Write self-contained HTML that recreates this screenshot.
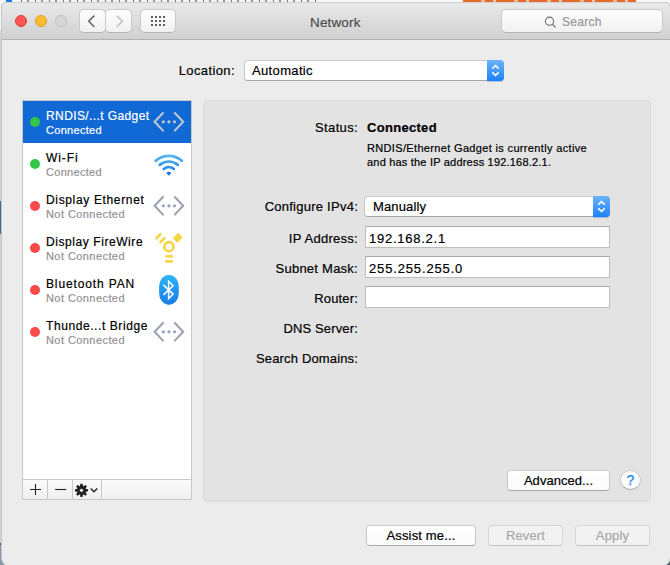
<!DOCTYPE html>
<html><head><meta charset="utf-8">
<style>
*{margin:0;padding:0;box-sizing:border-box}
html,body{width:670px;height:565px;overflow:hidden;background:#f7f7f7;font-family:"Liberation Sans",sans-serif;color:#000}
body{position:relative;-webkit-text-stroke:0.2px currentColor}
#win{position:absolute;left:1px;top:2px;width:670px;height:565px;border-radius:5px 5px 10px 9px;border:1px solid #c4c4c4;background:#ececec;overflow:hidden}
#tb{position:absolute;left:1px;top:2px;width:670px;height:38px;border-radius:5px 5px 0 0;border:1px solid #c4c4c4;border-top-color:#cfcfcf;border-bottom:1px solid #b1b1b1;background:linear-gradient(#e9e9e9,#d0d0d0)}
.tl{position:absolute;top:15px;width:12px;height:12px;border-radius:50%}
.btn{position:absolute;background:linear-gradient(#fdfdfd,#f1f1f1);border:1px solid #c9c9c9;border-bottom-color:#b5b5b5;border-radius:5px}
.t{position:absolute;white-space:nowrap;font-size:13px;line-height:16px;letter-spacing:0.15px}
.r{text-align:right}
#side{position:absolute;left:22px;top:100px;width:170px;height:400px;border:1px solid #c8c8c8;background:#fff}
.row{position:absolute;left:0;width:168px;height:42px}
.dot{position:absolute;left:7px;top:16px;width:10px;height:10px;border-radius:50%}
.g{background:#33c748}
.rd{background:#fb4a4c}
.nm{position:absolute;left:23px;top:7.6px;font-size:12px;line-height:14px;white-space:nowrap;letter-spacing:0.4px}
.st{position:absolute;left:23px;top:23px;font-size:11px;line-height:13px;color:#929292;white-space:nowrap;letter-spacing:0.3px}
.ico{position:absolute;left:122px;top:0;width:46px;height:42px}
#bar{position:absolute;left:22px;top:479px;width:170px;height:21px;border:1px solid #c8c8c8;background:linear-gradient(#fbfbfb,#f0f0f0)}
#panel{position:absolute;left:203px;top:100px;width:448px;height:402px;border:1px solid #dadada;border-radius:4px;background:#e3e3e3}
.fld{position:absolute;left:365px;width:245px;height:22px;background:#fff;border:1px solid #bdbdbd;border-top-color:#a9a9a9}
.pop{position:absolute;background:#fff;border-radius:4px;border:1px solid #c4c4c4;border-top-color:#cbcbcb;border-bottom-color:#a6a6a6}
.pop .arr{position:absolute;right:-1px;top:-1px;bottom:-1px;width:17px;border-radius:0 4px 4px 0;background:linear-gradient(#6cb3fa,#1a82fb);box-shadow:0 1px 0 rgba(0,60,160,.25)}
.pb{position:absolute;height:21px;border-radius:4px;background:linear-gradient(#fff,#fbfbfb);border:1px solid #c6c6c6;border-top-color:#cdcdcd;border-bottom-color:#a9a9a9;text-align:center;font-size:13px;line-height:19px;letter-spacing:0.15px}
.dis{background:#f2f2f2;color:#a8a8a8;border-color:#d6d6d6;border-bottom-color:#c4c4c4}
</style></head><body>
<!-- background behind window -->
<div style="position:absolute;left:0;top:30px;width:1px;height:535px;background:#d4d4d4"></div>
<div style="position:absolute;left:0;top:201px;width:1px;height:33px;background:#4a6490"></div>
<div style="position:absolute;left:0;top:543px;width:1px;height:2px;background:#555"></div>
<div style="position:absolute;left:0;top:545px;width:12px;height:20px;background:#8797ab"></div>
<div style="position:absolute;left:18px;top:0;width:300px;height:2px;background:repeating-linear-gradient(90deg,#f4f4f4 0 3px,#777 3px 4px,#f4f4f4 4px 9px,#999 9px 11px,#f4f4f4 11px 14px)"></div>
<div style="position:absolute;left:463px;top:0;width:173px;height:3px;background:repeating-linear-gradient(90deg,#e8692e 0 18px,#f3b795 18px 22px,#e8692e 22px 30px,#f6c7ad 30px 33px)"></div>
<div style="position:absolute;left:6px;top:0;width:6px;height:2px;background:#1a7ae8"></div>

<div style="position:absolute;left:662px;top:557px;width:8px;height:8px;background:#4f5b6b"></div>
<div id="win"></div>
<div id="tb">
  <div class="tl" style="left:13px;top:12px;background:#fc5753;border:1px solid #df3d37"></div>
  <div class="tl" style="left:33px;top:12px;background:#fdbc2e;border:1px solid #dd9e1e"></div>
  <div class="tl" style="left:53px;top:12px;background:#d6d6d6;border:1px solid #c0c0c0"></div>
  <div class="btn" style="left:77px;top:6px;width:27px;height:24px"></div>
  <div class="btn" style="left:103px;top:6px;width:27px;height:24px"></div>
  <div class="btn" style="left:138px;top:6px;width:36px;height:24px"></div>
  <svg style="position:absolute;left:77px;top:6px" width="52" height="24">
    <path d="M15.3 6.6 L9.7 12.2 L15.3 17.8" fill="none" stroke="#6a6a6a" stroke-width="1.6"/>
    <path d="M37.7 6.6 L43.3 12.2 L37.7 17.8" fill="none" stroke="#c2c2c2" stroke-width="1.6"/>
  </svg>
  <svg style="position:absolute;left:138px;top:5px" width="36" height="24" fill="#5c5c5c">
    <rect x="11" y="8" width="2" height="2"/><rect x="15" y="8" width="2" height="2"/><rect x="19" y="8" width="2" height="2"/><rect x="23" y="8" width="2" height="2"/>
    <rect x="11" y="12" width="2" height="2"/><rect x="15" y="12" width="2" height="2"/><rect x="19" y="12" width="2" height="2"/><rect x="23" y="12" width="2" height="2"/>
    <rect x="11" y="16" width="2" height="2"/><rect x="15" y="16" width="2" height="2"/><rect x="19" y="16" width="2" height="2"/><rect x="23" y="16" width="2" height="2"/>
  </svg>
  <div class="t" style="left:308px;top:12px;color:#4d4d4d;font-size:13.5px">Network</div>
  <div class="btn" style="left:499px;top:6px;width:162px;height:24px"></div>
  <svg style="position:absolute;left:541px;top:12px" width="14" height="14"><circle cx="6.5" cy="6.2" r="4.1" fill="none" stroke="#6e6e6e" stroke-width="1.1"/><path d="M9.4 9.2 L12.6 12.4" stroke="#6e6e6e" stroke-width="1.3"/></svg>
  <div class="t" style="left:560px;top:11px;color:#979797;font-size:12px;letter-spacing:0.3px">Search</div>
</div>

<!-- location -->
<div class="t r" style="left:150px;top:63px;width:85px;letter-spacing:0.4px">Location:</div>
<div class="pop" style="left:244px;top:60px;width:260px;height:21px"><div class="arr"><svg width="17" height="21" style="position:absolute;left:0;top:0"><path d="M5.3 8.6 L8.5 5.6 L11.7 8.6 M5.3 12.4 L8.5 15.4 L11.7 12.4" fill="none" stroke="#fff" stroke-width="1.5"/></svg></div></div>
<div class="t" style="left:252px;top:63px;letter-spacing:0.35px">Automatic</div>

<!-- sidebar -->
<div id="side">
  <div class="row" style="top:0;background:#1169d5">
    <div class="dot g"></div>
    <div class="nm" style="color:#fff">RNDIS/...t Gadget</div>
    <div class="st" style="color:#fff">Connected</div>
    <svg class="ico" width="46" height="42"><g fill="none" stroke="#bfc5ce" stroke-width="2.1" stroke-linecap="round" stroke-linejoin="miter"><path d="M18 12 L9.6 20.8 L18 29.6"/><path d="M29.8 12 L38.2 20.8 L29.8 29.6"/></g><g fill="#bfc5ce"><circle cx="18.3" cy="20.8" r="1.6"/><circle cx="23.9" cy="20.8" r="1.6"/><circle cx="29.5" cy="20.8" r="1.6"/></g></svg>
  </div>
  <div class="row" style="top:42px">
    <div class="dot g"></div>
    <div class="nm" style="letter-spacing:0.9px">Wi-Fi</div>
    <div class="st">Connected</div>
    <svg class="ico" width="46" height="42"><defs><linearGradient id="wg" gradientUnits="userSpaceOnUse" x1="0" y1="11" x2="0" y2="33"><stop offset="0" stop-color="#5cbcf6"/><stop offset="1" stop-color="#1473e2"/></linearGradient></defs><g fill="none" stroke="url(#wg)" stroke-width="2.7" stroke-linecap="round"><path d="M10.75 17.81 A19.50 19.50 0 0 1 36.85 17.81"/><path d="M14.75 21.89 A13.80 13.80 0 0 1 32.85 21.89"/><path d="M18.70 26.01 A8.10 8.10 0 0 1 28.90 26.01"/></g><path d="M23.8 32.8 L21.3 30.1 A3.5 3.5 0 0 1 26.3 30.1 Z" fill="#1576e3"/></svg>
  </div>
  <div class="row" style="top:84px">
    <div class="dot rd"></div>
    <div class="nm" style="letter-spacing:0.65px">Display Ethernet</div>
    <div class="st" style="letter-spacing:0.43px">Not Connected</div>
    <svg class="ico" width="46" height="42"><g fill="none" stroke="#9aa3b1" stroke-width="2.1" stroke-linecap="round" stroke-linejoin="miter"><path d="M18 12 L9.6 20.8 L18 29.6"/><path d="M29.8 12 L38.2 20.8 L29.8 29.6"/></g><g fill="#9aa3b1"><circle cx="18.3" cy="20.8" r="1.6"/><circle cx="23.9" cy="20.8" r="1.6"/><circle cx="29.5" cy="20.8" r="1.6"/></g></svg>
  </div>
  <div class="row" style="top:126px">
    <div class="dot rd"></div>
    <div class="nm" style="letter-spacing:0.57px">Display FireWire</div>
    <div class="st" style="letter-spacing:0.43px">Not Connected</div>
    <svg class="ico" width="46" height="42"><g fill="#f5d542"><circle cx="23.9" cy="19.7" r="4.6" fill="none" stroke="#f5d542" stroke-width="2.6"/>
<rect x="20.2" y="28.1" width="7.7" height="2.6"/><rect x="20.2" y="33.1" width="7.7" height="2.6"/>
<g transform="translate(23.9 19.7) rotate(-45)"><rect x="-3.85" y="-10.5" width="7.7" height="2.6"/><rect x="-3.85" y="-16.1" width="7.7" height="2.6"/></g>
<g transform="translate(23.9 19.7) rotate(45)"><rect x="-3.2" y="-16.4" width="6.4" height="7.6"/></g></g></svg>
  </div>
  <div class="row" style="top:168px">
    <div class="dot rd"></div>
    <div class="nm" style="letter-spacing:0.87px">Bluetooth PAN</div>
    <div class="st" style="letter-spacing:0.43px">Not Connected</div>
    <svg class="ico" width="46" height="42"><defs><linearGradient id="bg2" x1="0" y1="0" x2="0" y2="1"><stop offset="0" stop-color="#2db4f9"/><stop offset="1" stop-color="#1a7be4"/></linearGradient></defs><rect x="14.1" y="5.9" width="19.7" height="29.8" rx="9.85" ry="11.5" fill="url(#bg2)"/><path d="M18.4 15.9 L28.1 25.1 L23.6 29.7 V12.3 L28.1 16.7 L18.4 25.9" fill="none" stroke="#fff" stroke-width="1.5" stroke-linejoin="miter"/></svg>
  </div>
  <div class="row" style="top:210px">
    <div class="dot rd"></div>
    <div class="nm" style="letter-spacing:0.58px">Thunde...t Bridge</div>
    <div class="st" style="letter-spacing:0.43px">Not Connected</div>
    <svg class="ico" width="46" height="42"><g fill="none" stroke="#9aa3b1" stroke-width="2.1" stroke-linecap="round" stroke-linejoin="miter"><path d="M18 12 L9.6 20.8 L18 29.6"/><path d="M29.8 12 L38.2 20.8 L29.8 29.6"/></g><g fill="#9aa3b1"><circle cx="18.3" cy="20.8" r="1.6"/><circle cx="23.9" cy="20.8" r="1.6"/><circle cx="29.5" cy="20.8" r="1.6"/></g></svg>
  </div>
</div>
<div id="bar">
  <div style="position:absolute;left:24px;top:0;width:1px;height:19px;background:#c8c8c8"></div>
  <div style="position:absolute;left:49px;top:0;width:1px;height:19px;background:#c8c8c8"></div>
  <div style="position:absolute;left:78px;top:0;width:1px;height:19px;background:#c8c8c8"></div>
  <svg style="position:absolute;left:0;top:0" width="100" height="19">
    <path d="M7 9.5 H18 M12.5 4 V15" stroke="#222" stroke-width="1.1"/>
    <path d="M32.2 9.5 H43.2" stroke="#222" stroke-width="1.1"/>
    <g transform="translate(58.5 10.3)" fill="#222">
      <circle r="4.6"/>
      <g><path d="M-1.6 -4 L-1.05 -6.6 L1.05 -6.6 L1.6 -4 Z M-1.6 4 L-1.05 6.6 L1.05 6.6 L1.6 4 Z"/><g transform="rotate(45)"><path d="M-1.6 -4 L-1.05 -6.6 L1.05 -6.6 L1.6 -4 Z M-1.6 4 L-1.05 6.6 L1.05 6.6 L1.6 4 Z"/></g><g transform="rotate(90)"><path d="M-1.6 -4 L-1.05 -6.6 L1.05 -6.6 L1.6 -4 Z M-1.6 4 L-1.05 6.6 L1.05 6.6 L1.6 4 Z"/></g><g transform="rotate(135)"><path d="M-1.6 -4 L-1.05 -6.6 L1.05 -6.6 L1.6 -4 Z M-1.6 4 L-1.05 6.6 L1.05 6.6 L1.6 4 Z"/></g></g>
      <circle r="1.6" fill="#f4f4f4"/>
    </g>
    <path d="M67.7 8.5 L71 11.7 L74.3 8.5" fill="none" stroke="#222" stroke-width="1.4"/>
  </svg>
</div>

<!-- panel -->
<div id="panel"></div>
<div class="t r" style="left:258px;top:120px;width:100px;letter-spacing:0.35px">Status:</div>
<div class="t" style="left:367px;top:120px;font-weight:bold;letter-spacing:0.3px">Connected</div>
<div class="t" style="left:367px;top:141px;font-size:11px;line-height:14px;letter-spacing:0.34px">RNDIS/Ethernet Gadget is currently active</div>
<div class="t" style="left:367px;top:155px;font-size:11px;line-height:14px;letter-spacing:0.2px">and has the IP address 192.168.2.1.</div>

<div class="t r" style="left:200px;top:199px;width:158px;letter-spacing:0.25px">Configure IPv4:</div>
<div class="pop" style="left:364px;top:196px;width:246px;height:21px"><div class="arr"><svg width="17" height="21" style="position:absolute;left:0;top:0"><path d="M5.3 8.6 L8.5 5.6 L11.7 8.6 M5.3 12.4 L8.5 15.4 L11.7 12.4" fill="none" stroke="#fff" stroke-width="1.5"/></svg></div></div>
<div class="t" style="left:373px;top:199px">Manually</div>

<div class="t r" style="left:200px;top:231px;width:158px;letter-spacing:0.27px">IP Address:</div>
<div class="fld" style="top:226px"></div>
<div class="t" style="left:369px;top:231px;letter-spacing:0.75px">192.168.2.1</div>

<div class="t r" style="left:200px;top:261px;width:158px;letter-spacing:0.25px">Subnet Mask:</div>
<div class="fld" style="top:256px"></div>
<div class="t" style="left:369px;top:261px;letter-spacing:0.85px">255.255.255.0</div>

<div class="t r" style="left:200px;top:291px;width:158px">Router:</div>
<div class="fld" style="top:286px"></div>

<div class="t r" style="left:200px;top:321px;width:158px">DNS Server:</div>
<div class="t r" style="left:200px;top:351px;width:158px">Search Domains:</div>

<div class="pb" style="left:507px;top:470px;width:103px;letter-spacing:0.05px">Advanced...</div>
<div class="pb" style="left:620px;top:470px;width:21px;height:20px;border-radius:50%;color:#1d84f7;font-size:14px;line-height:19px;-webkit-text-stroke:0.25px #1d84f7">?</div>

<div class="pb" style="left:366px;top:525px;width:110px">Assist me...</div>
<div class="pb dis" style="left:488px;top:525px;width:75px">Revert</div>
<div class="pb dis" style="left:575px;top:525px;width:75px">Apply
  </div>
</body></html>
